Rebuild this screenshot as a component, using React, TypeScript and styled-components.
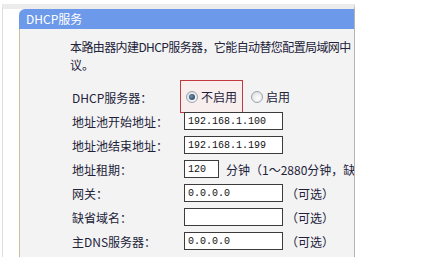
import styled, { createGlobalStyle } from "styled-components";

const GlobalStyle = createGlobalStyle`
  html, body {
    margin: 0;
    padding: 0;
    background: #fff;
  }
  body {
    font-family: "Noto Sans CJK SC", "Noto Sans", sans-serif;
    font-size: 12px;
    color: #22223a;
  }
`;

const rows = [
  { label: "地址池开始地址：", value: "192.168.1.100" },
  { label: "地址池结束地址：", value: "192.168.1.199" },
];

const optionalRows = [
  { label: "网关：", value: "0.0.0.0" },
  { label: "缺省域名：", value: "" },
  { label: "主DNS服务器：", value: "0.0.0.0" },
];

const App = () => {
  return (
    <Page>
      <GlobalStyle />
      <Frame>
        <Panel>
          <Header>DHCP服务</Header>
          <Body>
            <Intro>
              <Line $tight>本路由器内建DHCP服务器，它能自动替您配置局域网中</Line>
              <Line>议。</Line>
            </Intro>
            <Form>
              <Row>
                <Label>DHCP服务器：</Label>
                <Field>
                  <Highlight>
                    <Radio checked />
                    <RadioText>不启用</RadioText>
                  </Highlight>
                  <Radio />
                  <RadioText>启用</RadioText>
                </Field>
              </Row>
              {rows.map((r) => (
                <Row key={r.label}>
                  <Label>{r.label}</Label>
                  <Field>
                    <Input defaultValue={r.value} />
                  </Field>
                </Row>
              ))}
              <Row>
                <Label>地址租期：</Label>
                <Field>
                  <Input defaultValue="120" $width={35} />
                  <Note>分钟（1～2880分钟，缺</Note>
                </Field>
              </Row>
              {optionalRows.map((r) => (
                <Row key={r.label}>
                  <Label>{r.label}</Label>
                  <Field>
                    <Input defaultValue={r.value} />
                    <Hint>（可选）</Hint>
                  </Field>
                </Row>
              ))}
            </Form>
          </Body>
        </Panel>
      </Frame>
    </Page>
  );
};

const Page = styled.div`
  width: 443px;
  height: 257px;
  overflow: hidden;
  background: #fff;
`;

const Frame = styled.div`
  margin: 4px 0 0 2px;
  width: 353px;
  height: 253px;
  box-sizing: border-box;
  border-left: 1px solid #dedede;
  border-right: 1px solid #b4b4b4;
  border-top: 5px solid #ececec;
  padding-left: 16px;
  overflow: hidden;
`;

const Panel = styled.div`
  width: 420px;
`;

const Header = styled.div`
  height: 20px;
  line-height: 20px;
  padding-left: 7px;
  background: #6d99ea;
  color: #fff;
  border-radius: 6px 6px 0 0;
`;

const Body = styled.div`
  background: #f3f3f3;
  border-left: 1px solid #cdbf98;
  padding: 9px 0 0 50px;
  height: 260px;
`;

const Intro = styled.div`
  line-height: 18px;
`;

const Line = styled.div<{ $tight?: boolean }>`
  white-space: nowrap;
  letter-spacing: ${(p) => (p.$tight ? "-0.6px" : "0")};
`;

const Form = styled.div`
  margin-top: 11px;
  padding-left: 2px;
`;

const Row = styled.div`
  display: grid;
  grid-template-columns: 112px auto;
  align-items: center;
  height: 24px;
`;

const Label = styled.span`
  white-space: nowrap;
`;

const Field = styled.div`
  display: flex;
  align-items: center;
  white-space: nowrap;
`;

const Highlight = styled.span`
  display: flex;
  align-items: center;
  height: 31px;
  margin: -5px 8px -4px -4px;
  padding: 0 5px 0 5px;
  border: 1px solid #c23a3e;
  background: #f8eeee;
`;

const Radio = styled.span<{ checked?: boolean }>`
  position: relative;
  width: 10px;
  height: 10px;
  border-radius: 50%;
  border: 1px solid #9aa3ad;
  background: radial-gradient(circle at 60% 65%, #fff 0%, #e4e4e4 70%, #cfcfcf 100%);
  margin-right: 3px;
  &::after {
    content: "";
    display: ${(p) => (p.checked ? "block" : "none")};
    position: absolute;
    left: 2px;
    top: 2px;
    width: 6px;
    height: 6px;
    border-radius: 50%;
    background: radial-gradient(circle at 40% 40%, #6d8fb0 0%, #28455f 80%);
  }
`;

const RadioText = styled.span`
  line-height: 14px;
`;

const Input = styled.input<{ $width?: number }>`
  box-sizing: border-box;
  width: ${(p) => p.$width ?? 99}px;
  height: 18px;
  padding: 0 3px;
  border: 1px solid #3c3c3c;
  background: #fff;
  font-family: "Liberation Mono", monospace;
  font-size: 10px;
  color: #111;
  outline: none;
`;

const Note = styled.span`
  margin-left: 7px;
`;

const Hint = styled.span`
  margin-left: 3px;
`;

export default App;
